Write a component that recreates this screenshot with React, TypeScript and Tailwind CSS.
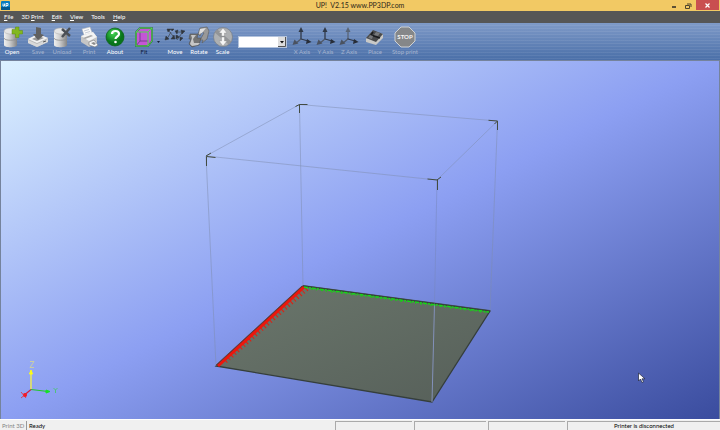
import React from "react";

type IconProps = { children: React.ReactNode };

function Icon({ children }: IconProps) {
  return (
    <svg viewBox="0 0 22 22" className="h-[22px] w-[22px] shrink-0" aria-hidden="true">
      {children}
    </svg>
  );
}

type ToolProps = {
  label: string;
  width: string;
  disabled?: boolean;
  dark?: boolean;
  children: React.ReactNode;
};

function Tool({ label, width, disabled, dark, children }: ToolProps) {
  const color = disabled ? "text-[#a5b4cf]" : dark ? "text-[#101a3c]" : "text-white";
  return (
    <button
      type="button"
      disabled={disabled}
      className={`flex shrink-0 flex-col items-center whitespace-nowrap ${width} ${color}`}
    >
      <Icon>{children}</Icon>
      <span className="leading-[8px]">{label}</span>
    </button>
  );
}

function Cylinder() {
  return (
    <>
      <path d="M3 5v14c0 3 13 3 13 0V5z" fill="url(#metal)" />
      <path d="M3 12c0 3 13 3 13 0" fill="none" stroke="#8d8d8d" strokeWidth="0.8" />
      <ellipse cx="9.500" cy="5" rx="6.500" ry="3" fill="#e4e4e4" stroke="#aaa" strokeWidth="0.5" />
    </>
  );
}

function AxisIcon({ up }: { up: string }) {
  return (
    <g strokeWidth="1.300" strokeLinecap="round">
      <path d="M10 13V5" stroke={up} />
      <path d="M10 1l2.500 5h-5z" fill={up} />
      <path d="M10 13l7 2" stroke="#30394a" />
      <path d="M20.500 16l-5.500 2 1-5z" fill="#272d38" />
      <path d="M10 13l-5 4" stroke="#4f5868" />
      <path d="M1.500 19l2-5.500 4 4z" fill="#4a5260" />
    </g>
  );
}

function Defs() {
  return (
    <svg className="absolute h-0 w-0" aria-hidden="true">
      <defs>
        <linearGradient id="metal">
          <stop offset="0" stopColor="#efefef" />
          <stop offset="0.400" stopColor="#d2d2d2" />
          <stop offset="1" stopColor="#858585" />
        </linearGradient>
        <linearGradient id="plate" x1="0" y1="0" x2="1" y2="1">
          <stop offset="0" stopColor="#6b776c" />
          <stop offset="1" stopColor="#565f59" />
        </linearGradient>
        <radialGradient id="help" cx="0.4" cy="0.3">
          <stop offset="0" stopColor="#43d653" />
          <stop offset="1" stopColor="#08751a" />
        </radialGradient>
      </defs>
    </svg>
  );
}

function TitleBar() {
  return (
    <header className="grid h-[11px] shrink-0 grid-cols-[1fr_auto_1fr] items-center bg-[#f2c964] text-[7px] leading-[11px] text-[#2c2618]">
      <svg viewBox="0 0 9 9" className="ml-px h-[9px] w-[9px]" role="img" aria-label="UP">
        <rect width="9" height="9" rx="1" fill="#087cc0" />
        <rect y="6" width="9" height="3" fill="#04588f" />
        <path d="M2 2.500v2.500h1.500V2.500M5 6V2.500h2V4.500H5" fill="none" stroke="#fff" strokeWidth="0.9" />
      </svg>
      <h1 className="whitespace-pre">UP!  V2.15 www.PP3DP.com</h1>
      <div className="flex h-full justify-end">
        <button type="button" aria-label="Minimize" className="flex w-3 items-center justify-center">
          <span className="mt-0.5 h-0.5 w-1 bg-[#5d5134]" />
        </button>
        <button type="button" aria-label="Restore" className="flex w-4 items-center justify-center">
          <svg viewBox="0 0 7 6" className="h-[6px] w-[7px]" fill="none" stroke="#4e452d">
            <path d="M2 1h4v3M.5 2.500h4v3h-4z" />
          </svg>
        </button>
        <button type="button" aria-label="Close" className="mr-px flex h-[10px] w-[23px] items-center justify-center bg-[#c94f50]">
          <svg viewBox="0 0 5 5" className="h-[5px] w-[5px]" stroke="#fff" strokeWidth="1.200">
            <path d="M.5.5l4 4M4.500.5l-4 4" />
          </svg>
        </button>
      </div>
    </header>
  );
}

function MenuBar() {
  return (
    <nav className="flex h-3 shrink-0 items-center gap-2 bg-[#565656] pl-1 text-[6px] leading-[12px] text-white">
      <button type="button"><u>F</u>ile</button>
      <button type="button">3D <u>P</u>rint</button>
      <button type="button"><u>E</u>dit</button>
      <button type="button"><u>V</u>iew</button>
      <button type="button">Tools</button>
      <button type="button"><u>H</u>elp</button>
    </nav>
  );
}

function Toolbar() {
  return (
    <div className="flex h-[37px] shrink-0 items-start overflow-hidden bg-[repeating-linear-gradient(to_bottom,transparent_0px,transparent_2px,#ffffff12_2px,#ffffff12_3px),linear-gradient(to_bottom,#7f9ac8,#4a6fa8)] pt-[3px] text-[6px]">
      <Tool label="Open" width="w-6">
        <Cylinder />
        <path d="M11 3.500h3.500V1h3.500v3.500h3.500V8H18v3.500h-3.500V8H11z" fill="#83b81e" stroke="#5c8a10" strokeWidth="0.5" />
      </Tool>
      <Tool label="Save" width="w-7" disabled>
        <path d="M1 13l10-5 10 4v4l-11 5-9-4z" fill="#b9b9b9" />
        <path d="M1 13l10-5 10 4-11 5z" fill="#f1f1f1" />
        <path d="M5 13l6-3 6 2-7 3z" fill="#989898" />
        <path d="M1 14l9 4 11-5v3l-11 5-9-4z" fill="#d9d9d9" />
        <path d="M9 1l5 1v6l3 1-6 5-5-6 3 0z" fill="#606060" />
        <path d="M16 16l3-1" stroke="#555" />
      </Tool>
      <Tool label="Unload" width="w-5" disabled>
        <Cylinder />
        <path d="M11 3l8 7M19 2l-8 9" stroke="#4b4f55" strokeWidth="2.500" />
      </Tool>
      <div className="w-[5px]" />
      <Tool label="Print" width="w-6" disabled>
        <path d="M4 3l8-2 3 8-8 3z" fill="#fafafa" stroke="#b5b5b5" strokeWidth="0.5" />
        <path d="M6 5l5-1.500M7 7l5-1.500" stroke="#adb6c6" strokeWidth="0.7" />
        <path d="M3 10l12-4 4 5v6l-8 4-8-5z" fill="#c5c5c5" />
        <path d="M3 10l12-4 4 5-8 4z" fill="#f4f4f4" />
        <path d="M5 12l8-3 2 1-8 3z" fill="#a7a7a7" />
        <path d="M11 16l5-2 4 5-3 2-6-2z" fill="#f8f8f8" stroke="#777" strokeWidth="0.6" />
        <path d="M13 17l3-1 2 2-2 1z" fill="#8b8b8b" />
      </Tool>
      <Tool label="About" width="w-7">
        <circle cx="11" cy="11" r="9" fill="url(#help)" stroke="#0b5d14" strokeWidth="0.7" />
        <path d="M8 8c0-4 7-4 7 0 0 2.500-3.500 2.500-3.500 5" fill="none" stroke="#fff" strokeWidth="2.200" />
        <circle cx="11.500" cy="16" r="1.300" fill="#fff" />
      </Tool>
      <div className="w-[3px]" />
      <Tool label="Fit" width="w-6" dark>
        <path d="M3 6l4-4h12v13l-4 5H3z" fill="#c455d6" />
        <path d="M7 6v9l-4 5M7 15h8" fill="none" stroke="#5f3d7b" strokeWidth="0.8" />
        <path d="M3 6l4-4h12v13l-4 5H3z" fill="none" stroke="#2e5b38" strokeWidth="1.500" />
        <path d="M3 6l4-4h12v13l-4 5H3zM3 6h12v14M15 6l4-4" fill="none" stroke="#4fdc4e" strokeWidth="1" />
      </Tool>
      <button type="button" aria-label="Fit options" className="mt-[15px] flex w-1 justify-center">
        <svg viewBox="0 0 3 2" className="h-0.5 w-[3px]"><path d="M0 0h3L1.500 2z" fill="#182238" /></svg>
      </button>
      <div className="w-[3px]" />
      <Tool label="Move" width="w-6">
        <path d="M3 13l4-7M5 5l4 5M13 14l5-7M12 6l6 0M13 9l2 3" fill="none" stroke="#424b57" strokeWidth="0.8" />
        <path d="M1 14l1-4 3 3zM3 3l4 0-3 3zM8 5l2-2-3 0zM7 13l4 0-1-4zM12 9l0 4 3-2zM21 5l-4-1 1 4zM14 4l-3 1 2 3zM16 15l3-3-3-1z" fill="#30363e" stroke="#30363e" strokeWidth="0.5" />
      </Tool>
      <Tool label="Rotate" width="w-6">
        <path d="M10 8l2-6 7-1 2 4-2 8-5 4 1-3-3 0 4-7-2-1-2 4z" fill="#999" stroke="#5b5b5b" strokeWidth="0.6" />
        <path d="M12 3l6-1-4 5-3 1z" fill="#dedede" />
        <path d="M2 8l8 0-1 4 4 0-2 7-7 2-3-3 2-5-2 0z" fill="#747474" stroke="#515151" strokeWidth="0.6" />
        <path d="M3 9l5 0-3 4 1 4 6 0-2 2-6 1-2-2 2-6z" fill="#c6c6c6" />
      </Tool>
      <Tool label="Scale" width="w-[23px]">
        <circle cx="11" cy="11" r="9.500" fill="#aeb0b2" stroke="#777d85" strokeWidth="0.7" />
        <path d="M4 5l14 12" stroke="#929497" strokeWidth="4" />
        <path d="M11 2l4 5h-2.500v3H9.500V7H7zM11 20l4-5h-2.500v-4H9.500v4H7z" fill="#f5f5f5" stroke="#888" strokeWidth="0.4" />
      </Tool>
      <div className="relative mt-[10px] ml-1 h-3 w-[49px] shrink-0">
        <select aria-label="Value" className="h-full w-full appearance-none border border-[#b3c3dc] bg-white pl-1 text-[6px] text-black">
          <option></option>
        </select>
        <svg viewBox="0 0 8 10" className="pointer-events-none absolute top-px right-px h-[10px] w-2" aria-hidden="true">
          <path d="M0 0h8v10H0z" fill="#dedede" />
          <path d="M0 9.500h7.500V0" fill="none" stroke="#555" />
          <path d="M2 4h4L4 6.500z" fill="#111" />
        </svg>
      </div>
      <div className="w-[3px]" />
      <Tool label="X Axis" width="w-6" disabled><AxisIcon up="#303947" /></Tool>
      <Tool label="Y Axis" width="w-[23px]" disabled><AxisIcon up="#303947" /></Tool>
      <Tool label="Z Axis" width="w-6" disabled><AxisIcon up="#596577" /></Tool>
      <Tool label="Place" width="w-7" disabled>
        <path d="M2 13l6-8 11 3v4l-7 7-10-3z" fill="#c9c9c7" />
        <path d="M2 12l7-8 10 4-7 8z" fill="#4a4b4c" />
        <path d="M7 9l9 3M9 6l-4 6" stroke="#191b1e" strokeWidth="1.500" />
        <path d="M6 9l3 1-1 3-4-1zM12 6l4 1-2 3-4-1z" fill="#77797c" />
      </Tool>
      <Tool label="Stop print" width="w-8" disabled>
        <path d="M7 1h8l6 6v8l-6 6H7l-6-6V7z" fill="#858789" stroke="#ced1d4" />
        <text x="11" y="13" textAnchor="middle" fontSize="6" fontWeight="700" fill="#f5f5f5">STOP</text>
      </Tool>
    </div>
  );
}

function CornerMarks() {
  return (
    <g fill="none" stroke="#424b41" strokeWidth="1">
      <path d="M206.500 166v-9.500l9 1M206 156l5-3" />
      <path d="M299.500 113v-8.500h8M299.500 104.500l-4 2" />
      <path d="M497.500 130v-9l-9-.700M497.500 121l-3 3" />
      <path d="M437.500 190v-10l-10-1M437 180l4-3" />
    </g>
  );
}

function Viewport() {
  return (
    <main className="min-h-0 flex-1 border-x border-t border-[#75839c] bg-[linear-gradient(to_bottom_right,#dcf1ff_0%,#8c9ff2_50%,#3a4c9e_100%)]">
      <svg viewBox="1 61 718 358" className="block h-full w-full" role="img" aria-label="Build volume">
        <path d="M303 286L490 311L432 402L216 366Z" fill="url(#plate)" stroke="#353e3b" strokeWidth="1.300" />
        <g fill="none" stroke="#7e8dae" strokeWidth="0.500">
          <path d="M206 156L299.500 104.500L497.500 121L437 180Z" />
          <path d="M206 156L216 366M299.500 104.500L303 286M497.500 121L490 311" />
        </g>
        <path d="M437 180L434.500 304" stroke="#7686ba" strokeWidth="0.500" />
        <path d="M434.500 304L432 402" stroke="#8391ba" strokeWidth="1" />
        <CornerMarks />
        <path d="M307 289L224 363" stroke="#e91a0c" strokeWidth="4" strokeDasharray="1 3" />
        <path d="M304 287L218 366" stroke="#ed160c" strokeWidth="3" />
        <path d="M302 286L216 365" stroke="#65372c" strokeWidth="0.800" />
        <path d="M304 287L489 312" stroke="#17d517" strokeWidth="1.500" strokeDasharray="4 1 2 1" />
        <path d="M306 288.500L488 313" stroke="#20c51c" strokeWidth="1.200" strokeDasharray="1 4 2 3" />
        <path d="M303 285.500L490 310.500" stroke="#344333" strokeWidth="0.700" />

        <g fill="none">
          <path d="M31 389V374" stroke="#e6e65f" strokeWidth="1.600" />
          <path d="M31 370l1.500 4h-3z" fill="#ffff12" stroke="#ffff12" />
          <path d="M30 361.500h4l-4 6h4" stroke="#d5d792" strokeWidth="0.800" />
          <path d="M31 389.500l17 2" stroke="#22c52d" strokeWidth="1.200" />
          <path d="M46 390l4 1.500-4 1.500z" fill="#14e323" stroke="#14e323" />
          <path d="M53.500 388l2 2 2-2M55.500 390v3" stroke="#41cc5c" strokeWidth="0.800" />
          <path d="M31 389.500l-6 5" stroke="#d02043" strokeWidth="1.200" />
          <circle cx="25" cy="395" r="2" fill="#ff1018" />
          <path d="M21 392l5 6M21 398l6-5" stroke="#e72936" strokeWidth="0.800" />
        </g>
        <path d="M638.500 373v8l2-2 1.500 3.500 1.500-.700-1.500-3h3z" fill="#fff" stroke="#20253b" strokeWidth="0.700" />
      </svg>
    </main>
  );
}

function StatusBar() {
  return (
    <footer className="flex h-[11px] shrink-0 border-t border-white bg-[#f0f0f0] text-[6px] leading-[9px] text-black">
      <span className="mt-px w-[27px] border-r border-[#999] pl-0.5 whitespace-nowrap text-[#858585]">Print 3D</span>
      <span className="mt-px flex-1 pl-0.5">Ready</span>
      <span className="mt-px mr-0.5 w-[77px] border-t border-l border-[#aaa]" />
      <span className="mt-px mr-0.5 w-[72px] border-t border-l border-[#aaa]" />
      <span className="mt-px mr-0.5 w-[77px] border-t border-l border-[#aaa]" />
      <span className="mt-px w-[153px] border-t border-l border-[#aaa] text-center leading-[8px]">Printer is disconnected</span>
    </footer>
  );
}

export default function App() {
  return (
    <div className="flex h-screen flex-col overflow-hidden font-[Lato,'Noto_Sans',sans-serif]">
      <Defs />
      <TitleBar />
      <MenuBar />
      <Toolbar />
      <Viewport />
      <StatusBar />
    </div>
  );
}
